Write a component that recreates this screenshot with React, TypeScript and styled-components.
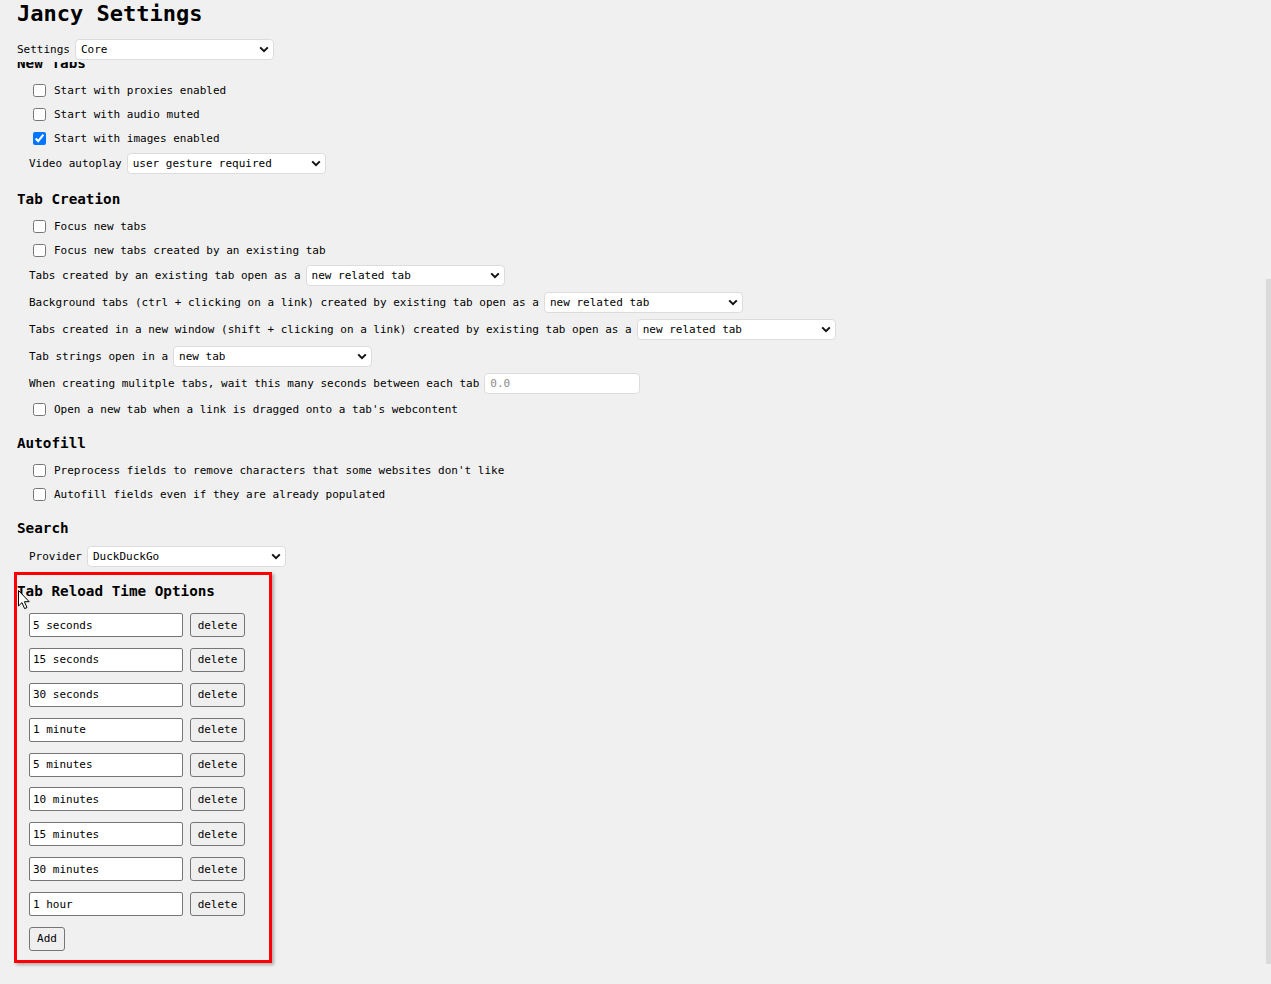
import { createGlobalStyle, styled } from 'styled-components';

const GlobalStyle = createGlobalStyle`
  html, body {
    margin: 0;
    background: #f0f0f0;
    overflow: hidden;
  }
  body {
    font: 11px "DejaVu Sans Mono", "Liberation Mono", monospace;
    color: #000;
  }
`;

const reloadOptions = [
  '5 seconds',
  '15 seconds',
  '30 seconds',
  '1 minute',
  '5 minutes',
  '10 minutes',
  '15 minutes',
  '30 minutes',
  '1 hour',
];

const Select = ({ value, options }: { value: string; options: string[] }) => (
  <SelectWrap>
    <NativeSelect defaultValue={value}>
      {options.map((o) => (
        <option key={o}>{o}</option>
      ))}
    </NativeSelect>
    <Chevron width="10" height="7" viewBox="0 0 10 7">
      <path d="M1.2 1.4 L5 5.2 L8.8 1.4" fill="none" stroke="#111" strokeWidth="2" />
    </Chevron>
  </SelectWrap>
);

const Check = ({ label, checked }: { label: string; checked?: boolean }) => (
  <CheckRow>
    <CheckBox type="checkbox" defaultChecked={checked} />
    <span>{label}</span>
  </CheckRow>
);

const tabOpenOptions = ['new related tab', 'new tab', 'new window'];

export default function App() {
  return (
    <>
      <GlobalStyle />
      <Page>
        <Main>
          <Header>
            <Title>Jancy Settings</Title>
            <SettingsRow>
              <span>Settings</span>
              <Select value="Core" options={['Core', 'Appearance', 'Advanced']} />
            </SettingsRow>
          </Header>
          <Body>
            <Section $first>
              <Heading>New Tabs</Heading>
              <Check label="Start with proxies enabled" />
              <Check label="Start with audio muted" />
              <Check label="Start with images enabled" checked />
              <FieldRow>
                <span>Video autoplay</span>
                <Select
                  value="user gesture required"
                  options={['user gesture required', 'allowed', 'blocked']}
                />
              </FieldRow>
            </Section>

            <Section>
              <Heading>Tab Creation</Heading>
              <Check label="Focus new tabs" />
              <Check label="Focus new tabs created by an existing tab" />
              <FieldRow>
                <span>Tabs created by an existing tab open as a</span>
                <Select value="new related tab" options={tabOpenOptions} />
              </FieldRow>
              <FieldRow>
                <span>Background tabs (ctrl + clicking on a link) created by existing tab open as a</span>
                <Select value="new related tab" options={tabOpenOptions} />
              </FieldRow>
              <FieldRow>
                <span>
                  Tabs created in a new window (shift + clicking on a link) created by existing tab
                  open as a
                </span>
                <Select value="new related tab" options={tabOpenOptions} />
              </FieldRow>
              <FieldRow>
                <span>Tab strings open in a</span>
                <Select value="new tab" options={tabOpenOptions} />
              </FieldRow>
              <FieldRow>
                <span>When creating mulitple tabs, wait this many seconds between each tab</span>
                <NumberInput placeholder="0.0" />
              </FieldRow>
              <Check label="Open a new tab when a link is dragged onto a tab's webcontent" />
            </Section>

            <Section>
              <Heading>Autofill</Heading>
              <Check label="Preprocess fields to remove characters that some websites don't like" />
              <Check label="Autofill fields even if they are already populated" />
            </Section>

            <Section>
              <Heading>Search</Heading>
              <FieldRow>
                <span>Provider</span>
                <Select value="DuckDuckGo" options={['DuckDuckGo', 'Google', 'Bing']} />
              </FieldRow>
            </Section>

            <HighlightSection>
              <Heading $spaced>Tab Reload Time Options</Heading>
              <Cursor width="13" height="20" viewBox="0 0 13 20">
                <path
                  d="M0.5 0.5 L0.5 16 L4 12.6 L6.6 18.6 L9 17.6 L6.4 11.7 L11.2 11.7 Z"
                  fill="#fff"
                  stroke="#000"
                  strokeWidth="1"
                  strokeLinejoin="round"
                />
              </Cursor>
              <ReloadList>
                {reloadOptions.map((opt) => (
                  <ReloadRow key={opt}>
                    <ReloadInput defaultValue={opt} />
                    <PlainButton>delete</PlainButton>
                  </ReloadRow>
                ))}
                <AddRow>
                  <PlainButton $narrow>Add</PlainButton>
                </AddRow>
              </ReloadList>
            </HighlightSection>
          </Body>
        </Main>
        <Rail />
      </Page>
    </>
  );
}

const Page = styled.div`
  display: flex;
  width: 1271px;
  height: 984px;
`;

const Main = styled.div`
  flex: 1;
  min-width: 0;
  display: flex;
  flex-direction: column;
`;

const Rail = styled.div`
  flex-shrink: 0;
  width: 5px;
  height: 685px;
  margin-top: 279px;
  background: #dadada;
`;

const Header = styled.header`
  padding: 0 0 3px 17px;
`;

const Title = styled.h1`
  margin: 0;
  font-size: 22px;
  line-height: 28px;
  font-weight: bold;
`;

const SettingsRow = styled.div`
  display: flex;
  align-items: center;
  gap: 5px;
  height: 20px;
  margin-top: 11px;
`;

const Body = styled.main`
  flex: 1;
  overflow: hidden;
  padding-left: 17px;
`;

const Section = styled.section<{ $first?: boolean }>`
  margin-top: ${({ $first }) => ($first ? '-9px' : '12px')};
`;

const HighlightSection = styled.section`
  position: relative;
  width: 252px;
  margin: 2px 0 0 -3px;
  padding: 6px 0 9px 0;
  border: 3px solid #f00;
  box-shadow: 2px 2px 3px rgba(0, 0, 0, 0.28);
`;

const Heading = styled.h2<{ $spaced?: boolean }>`
  margin: 0 0 ${({ $spaced }) => ($spaced ? '12px' : '5px')};
  font-size: 14.3px;
  line-height: 20px;
  font-weight: bold;
`;

const CheckRow = styled.label`
  display: flex;
  align-items: center;
  gap: 8px;
  height: 24px;
  padding-left: 16px;
  white-space: nowrap;
`;

const CheckBox = styled.input`
  width: 13px;
  height: 13px;
  margin: 0;
  accent-color: #0075ff;
`;

const FieldRow = styled.div`
  display: flex;
  align-items: center;
  gap: 5px;
  height: 27px;
  padding-left: 12px;
  white-space: nowrap;
`;

const SelectWrap = styled.span`
  position: relative;
  display: inline-flex;
  width: 199px;
  height: 21px;
  flex-shrink: 0;
`;

const NativeSelect = styled.select`
  appearance: none;
  width: 100%;
  height: 100%;
  margin: 0;
  padding: 0 20px 0 5px;
  border: 1px solid #dcdcdc;
  border-radius: 4px;
  background: #fff;
  color: #000;
  font: 11px "DejaVu Sans Mono", "Liberation Mono", monospace;
  outline: none;
`;

const Chevron = styled.svg`
  position: absolute;
  right: 5px;
  top: 7px;
  pointer-events: none;
`;

const NumberInput = styled.input`
  box-sizing: border-box;
  width: 156px;
  height: 21px;
  margin: 0;
  padding: 0 5px;
  border: 1px solid #dcdcdc;
  border-radius: 4px;
  background: #fff;
  font: 11px "DejaVu Sans Mono", "Liberation Mono", monospace;
  outline: none;

  &::placeholder {
    color: #8a8a8a;
  }
`;

const Cursor = styled.svg`
  position: absolute;
  left: 1px;
  top: 15px;
`;

const ReloadList = styled.div`
  display: flex;
  flex-direction: column;
  gap: 10.875px;
  padding-left: 12px;
`;

const ReloadRow = styled.div`
  display: flex;
  gap: 7px;
  height: 24px;
`;

const AddRow = styled.div`
  display: flex;
  height: 24px;
`;

const ReloadInput = styled.input`
  box-sizing: border-box;
  width: 154px;
  height: 24px;
  margin: 0;
  padding: 0 3px;
  border: 1px solid #767676;
  border-radius: 2px;
  background: #fff;
  color: #000;
  font: 11px "DejaVu Sans Mono", "Liberation Mono", monospace;
  outline: none;
`;

const PlainButton = styled.button<{ $narrow?: boolean }>`
  box-sizing: border-box;
  width: ${({ $narrow }) => ($narrow ? '36px' : '55px')};
  height: 24px;
  margin: 0;
  padding: 0;
  border: 1px solid #767676;
  border-radius: 3px;
  background: #efefef;
  color: #000;
  font: 11px "DejaVu Sans Mono", "Liberation Mono", monospace;
`;
